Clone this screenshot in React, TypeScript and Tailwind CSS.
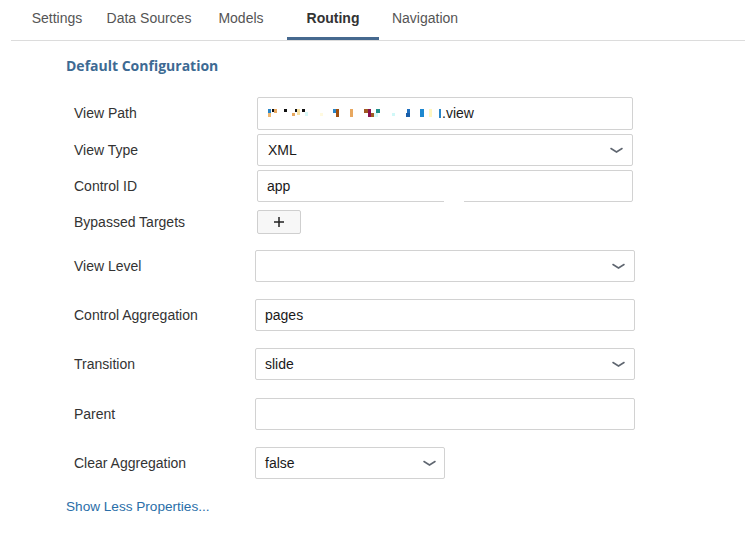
import React from "react";

const Chevron = () => (
  <svg width="13" height="7" viewBox="0 0 13 7" className="shrink-0">
    <path d="M1 1.5 L6.5 5 L12 1.5" fill="none" stroke="#5f6670" strokeWidth="1.5" strokeLinecap="round" />
  </svg>
);

const Blur = () => {
  const r: [number, number, number, number, string][] = [
    [0, 0, 3, 5, "#2a86c8"], [0, 4, 3, 4, "#f0b870"], [4, 0, 2, 3, "#111"], [6, 0, 3, 4, "#e8a860"],
    [16, 0, 3, 3, "#111"], [24, 4, 3, 3, "#e8a860"], [27, 0, 3, 3, "#111"], [29, 0, 3, 6, "#f8e0a0"],
    [34, 0, 3, 3, "#111"], [37, 3, 3, 4, "#d8f8f8"], [52, 4, 3, 3, "#fffae0"], [65, 0, 3, 4, "#2a86c8"],
    [68, 0, 3, 8, "#a05010"], [82, 0, 3, 8, "#e8a860"], [96, 0, 4, 4, "#a05a20"], [100, 0, 3, 8, "#8a1050"],
    [103, 4, 3, 4, "#a05a20"], [108, 0, 4, 4, "#20908a"], [106, 4, 4, 4, "#d8f8f8"], [124, 4, 3, 3, "#d0f8f8"],
    [139, 0, 3, 8, "#2070c0"], [138, 4, 4, 4, "#1a5ea8"], [152, 0, 4, 8, "#1e88d0"], [161, 0, 3, 8, "#fff6c0"],
    [171, 0, 2, 9, "#2a86c8"],
  ];
  return (
    <svg width="173" height="9" viewBox="0 0 173 9" className="shrink-0">
      {r.map(([x, y, w, h, c], i) => (
        <rect key={i} x={x} y={y} width={w} height={h} fill={c} />
      ))}
    </svg>
  );
};

export default function App() {
  const tabs = ["Settings", "Data Sources", "Models", "Routing", "Navigation"];
  return (
    <div className="w-[745px] h-[536px] bg-white font-['Liberation_Sans',Arial,sans-serif] text-[14px] text-[#333] overflow-hidden">
      <div className="ml-[11px] flex h-[41px] border-b border-[#dcdcdc]">
        {tabs.map((t) => (
          <div
            key={t}
            className={
              t === "Routing"
                ? "w-[92px] h-[40px] flex items-center justify-center border-b-[3px] border-[#46698f] font-bold text-[#333]"
                : "w-[92px] h-[40px] flex items-center justify-center border-b-[3px] border-transparent text-[#555]"
            }
          >
            {t}
          </div>
        ))}
      </div>

      <div className="pl-[66px]">
        <div className="mt-[15px] h-[20px] leading-[20px] font-['Open_Sans',sans-serif] font-bold text-[14px] text-[#3d6a93]">
          Default Configuration
        </div>

        <div className="ml-[8px] mt-[21px] flex flex-col">
          <div className="flex items-center h-[33px]">
            <div className="w-[183px]">View Path</div>
            <div className="w-[376px] h-[33px] border border-[#d2d2d2] rounded-[2px] flex items-center pl-[10px] text-[#1a1a1a]">
              <Blur />
              <span className="ml-[1px] -mt-[1px]">.view</span>
            </div>
          </div>
          <div className="flex items-center h-[32px] mt-[4px]">
            <div className="w-[183px]">View Type</div>
            <div className="w-[376px] h-[32px] border border-[#d2d2d2] rounded-[2px] flex items-center justify-between pl-[10px] pr-[9px] text-[#1a1a1a]">
              <span>XML</span>
              <Chevron />
            </div>
          </div>
          <div className="flex items-center h-[32px] mt-[4px]">
            <div className="w-[183px]">Control ID</div>
            <div className="relative w-[376px] h-[32px] border border-[#d2d2d2] rounded-[2px] flex items-center pl-[9px] text-[#1a1a1a]">
              <span>app</span>
              <div className="absolute -bottom-[1px] left-[186px] w-[20px] h-[4px] bg-white"></div>
            </div>
          </div>
          <div className="flex items-center h-[24px] mt-[8px]">
            <div className="w-[183px]">Bypassed Targets</div>
            <div className="w-[44px] h-[24px] border border-[#cfcfcf] rounded-[2px] bg-[#f7f7f7] flex items-center justify-center">
              <svg width="12" height="12" viewBox="0 0 12 12">
                <path d="M6 1 V11 M1 6 H11" stroke="#222" strokeWidth="1.5" />
              </svg>
            </div>
          </div>

          <div className="flex items-center h-[32px] mt-[16px]">
            <div className="w-[181px]">View Level</div>
            <div className="w-[380px] h-[32px] border border-[#d2d2d2] rounded-[2px] flex items-center justify-end pr-[9px]">
              <Chevron />
            </div>
          </div>
          <div className="flex items-center h-[32px] mt-[17px]">
            <div className="w-[181px]">Control Aggregation</div>
            <div className="w-[380px] h-[32px] border border-[#d2d2d2] rounded-[2px] flex items-center pl-[9px] text-[#1a1a1a]">
              pages
            </div>
          </div>
          <div className="flex items-center h-[32px] mt-[17px]">
            <div className="w-[181px]">Transition</div>
            <div className="w-[380px] h-[32px] border border-[#d2d2d2] rounded-[2px] flex items-center justify-between pl-[9px] pr-[9px] text-[#1a1a1a]">
              <span>slide</span>
              <Chevron />
            </div>
          </div>
          <div className="flex items-center h-[32px] mt-[18px]">
            <div className="w-[181px]">Parent</div>
            <div className="w-[380px] h-[32px] border border-[#d2d2d2] rounded-[2px]"></div>
          </div>
          <div className="flex items-center h-[32px] mt-[17px]">
            <div className="w-[181px]">Clear Aggregation</div>
            <div className="w-[190px] h-[32px] border border-[#d2d2d2] rounded-[2px] flex items-center justify-between pl-[9px] pr-[8px] text-[#1a1a1a]">
              <span>false</span>
              <Chevron />
            </div>
          </div>
        </div>

        <div className="mt-[18px] h-[20px] leading-[20px] text-[13.6px] text-[#2a6ea8]">Show Less Properties...</div>
      </div>
    </div>
  );
}
